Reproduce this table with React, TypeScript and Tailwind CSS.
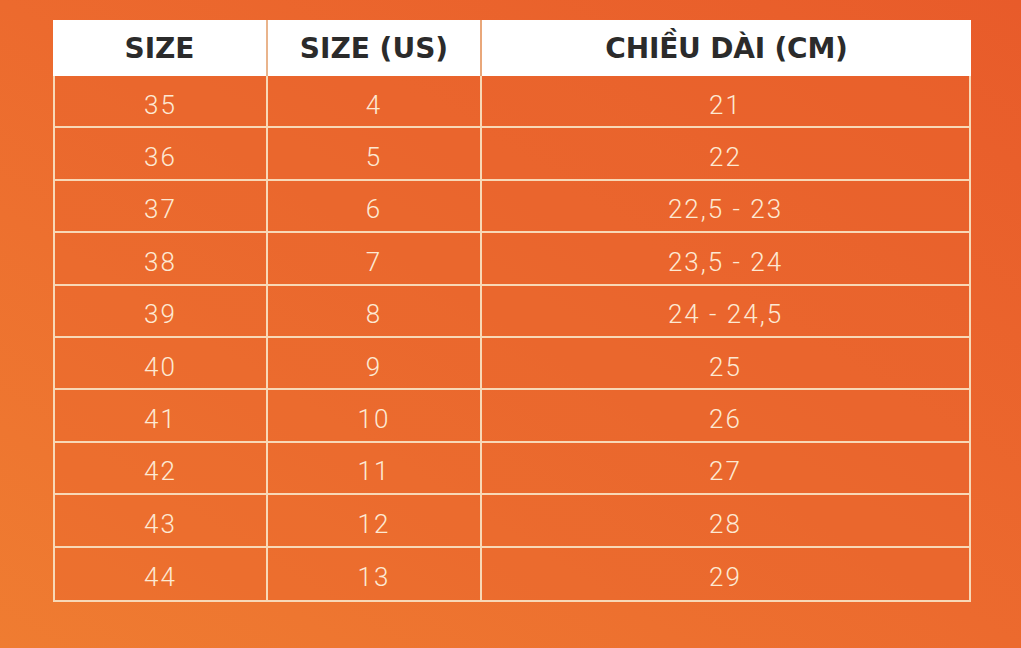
import React from "react";

const rows: [string, string, string][] = [
  ["35", "4", "21"],
  ["36", "5", "22"],
  ["37", "6", "22,5 - 23"],
  ["38", "7", "23,5 - 24"],
  ["39", "8", "24 - 24,5"],
  ["40", "9", "25"],
  ["41", "10", "26"],
  ["42", "11", "27"],
  ["43", "12", "28"],
  ["44", "13", "29"],
];

export default function App() {
  return (
    <div className="w-[1021px] h-[648px] overflow-hidden bg-gradient-to-tr from-[#ef7c31] via-[#ec6a2e] to-[#e85b2a] pt-[20px] pl-[53px]">
      <div className="w-[918px]">
        <div
          className="grid grid-cols-[215px_214px_489px] h-[56px] bg-white text-[#2b2b2b] font-bold text-[28px]"
          style={{ fontFamily: '"DejaVu Sans", sans-serif' }}
        >
          <div className="flex items-center justify-center pt-[2px] border-r-2 border-[#e9b48c]">SIZE</div>
          <div className="flex items-center justify-center pt-[2px] border-r-2 border-[#e9a77a]">SIZE (US)</div>
          <div className="flex items-center justify-center pt-[2px] tracking-[-0.2px]">CHIỀU DÀI (CM)</div>
        </div>
        <div
          className="border-2 border-t-0 border-[#f8d8b6] bg-[#e9642c]/40 text-[#fde9d3] font-light text-[26px] tracking-[2px]"
          style={{ fontFamily: 'Roboto, "Open Sans", sans-serif' }}
        >
          {rows.map((r, i) => (
            <div
              key={i}
              className={`grid grid-cols-[213px_214px_487px] h-[52.4px] ${i < rows.length - 1 ? "border-b-2 border-[#f8d8b6]" : ""}`}
            >
              <div className="flex items-center justify-center pt-[8px] border-r-2 border-[#f8d8b6]">{r[0]}</div>
              <div className="flex items-center justify-center pt-[8px] border-r-2 border-[#f8d8b6]">{r[1]}</div>
              <div className="flex items-center justify-center pt-[8px]">{r[2]}</div>
            </div>
          ))}
        </div>
      </div>
    </div>
  );
}
